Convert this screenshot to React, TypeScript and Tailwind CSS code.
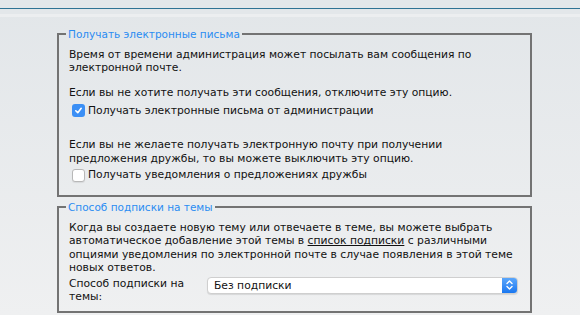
export default function App() {
  return (
    <div
      className="w-[580px] h-[315px] overflow-hidden bg-gradient-to-b from-[#e2e6e9] to-[#eff0f1] text-[10.75px] leading-[13.4px] text-[#111]"
      style={{ fontFamily: '"DejaVu Sans", Verdana, sans-serif' }}
    >
      {/* header strip */}
      <div className="h-[8px] bg-[#e3e7ea]" />
      <div className="h-px bg-[#2f7394]" />
      <div className="h-[5px] bg-[#e3e7ea]" />
      <div className="h-[3px] bg-[#eceef0]" />

      <div className="pl-[57px] pt-[10px]">
        {/* Email */}
        <fieldset className="w-[475px] border-2 border-[#737373] pl-[10px] pr-[8px] pt-[7px] pb-[12px]">
          <legend className="px-[2px] -ml-[3px] text-[10.5px] leading-[14px] text-[#2a8cf2]">
            Получать электронные письма
          </legend>
          <p>
            Время от времени администрация может посылать вам сообщения по
            электронной почте.
          </p>
          <p className="mt-[11px]">Если вы не хотите получать эти сообщения, отключите эту опцию.</p>
          <label className="mt-[3px] flex items-center h-[16px] pl-[3px]">
            <span className="w-[13px] h-[13px] rounded-[3px] bg-[#3b8ff5] flex items-center justify-center mr-[3px]">
              <svg width="9" height="9" viewBox="0 0 10 10">
                <path d="M2 5.3 L4.2 7.5 L8 2.6" fill="none" stroke="white" strokeWidth="1.8" strokeLinecap="round" strokeLinejoin="round" />
              </svg>
            </span>
            Получать электронные письма от администрации
          </label>
          <p className="mt-[20px]">
            Если вы не желаете получать электронную почту при получении
            предложения дружбы, то вы можете выключить эту опцию.
          </p>
          <label className="mt-[2px] flex items-center h-[16px] pl-[3px]">
            <span className="w-[13px] h-[13px] rounded-[3px] border border-[#b8b8b8] bg-white shadow-[0_1px_1px_rgba(0,0,0,0.08)] mr-[3px]" />
            Получать уведомления о предложениях дружбы
          </label>
        </fieldset>

        {/* Subscription */}
        <fieldset className="mt-[3px] w-[475px] border-2 border-[#737373] pl-[10px] pr-[8px] pt-[7px] pb-[8px]">
          <legend className="px-[2px] -ml-[3px] text-[10.5px] leading-[14px] text-[#2a8cf2]">
            Способ подписки на темы
          </legend>
          <p>
            Когда вы создаете новую тему или отвечаете в теме, вы можете выбрать
            автоматическое добавление этой темы в <span className="underline">список подписки</span> с различными
            опциями уведомления по электронной почте в случае появления в этой теме
            новых ответов.
          </p>
          <div className="mt-[2px] flex items-start">
            <div className="w-[138px]">Способ подписки на темы:</div>
            <div className="w-[311px] h-[17px] flex rounded-[4px] border border-[#cfcfcf] bg-white shadow-[0_1px_1px_rgba(0,0,0,0.1)] overflow-hidden">
              <span className="flex-1 pl-[6px] leading-[15px]">Без подписки</span>
              <span className="w-[15px] h-full bg-gradient-to-b from-[#5aa6fb] to-[#1877f0] flex items-center justify-center">
                <svg width="9" height="12" viewBox="0 0 9 12">
                  <path d="M2 4.5 L4.5 2 L7 4.5 M2 7.5 L4.5 10 L7 7.5" fill="none" stroke="white" strokeWidth="1.4" strokeLinecap="round" strokeLinejoin="round" />
                </svg>
              </span>
            </div>
          </div>
        </fieldset>
      </div>
    </div>
  )
}
